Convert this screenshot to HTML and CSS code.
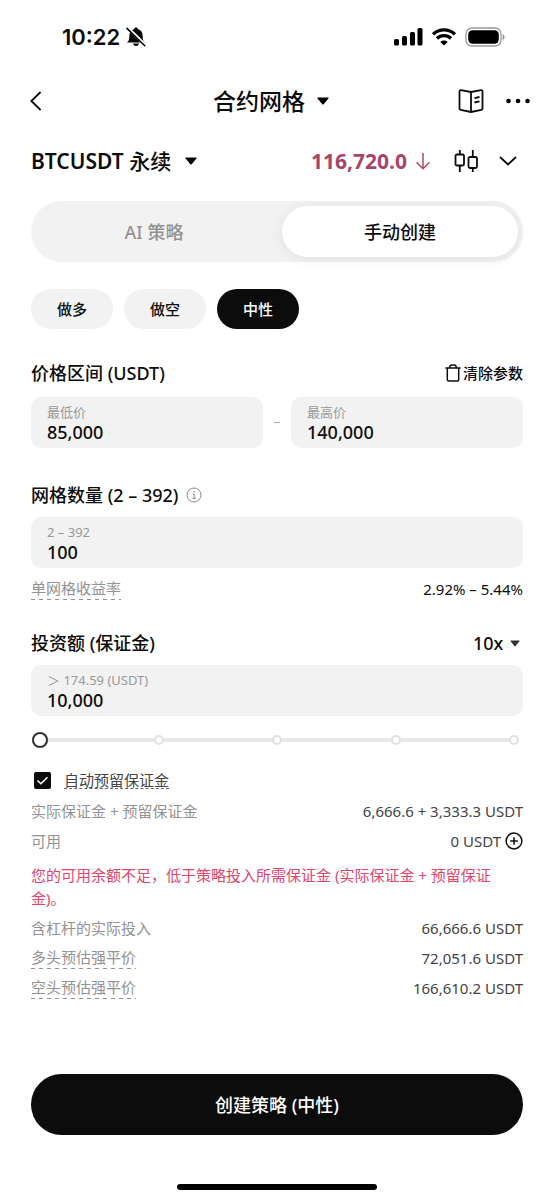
FILE: index.html
```
<!DOCTYPE html>
<html lang="zh-CN">
<head>
<meta charset="utf-8">
<meta name="viewport" content="width=device-width, initial-scale=1">
<title>合约网格</title>
<link rel="stylesheet" href="styles.css">
</head>
<body>
<div class="app">
  <div class="status">
    <div class="status-left">
      <span class="time">10:22</span>
      <svg width="20" height="20" viewBox="0 0 20 20" aria-hidden="true">
        <path d="M.8 15.600c2.200-1.500 2.500-3.200 2.500-6.400C3.300 5.400 5 3 8 2.300 8.300 1 9 .5 10 .5s1.700.5 2 1.800c3 .7 4.700 3.100 4.700 6.900 0 3.200.3 4.900 2.500 6.400z"/>
        <path d="M7 16.600h6c-.4 1.700-1.400 2.500-3 2.500s-2.600-.8-3-2.500z"/>
        <path d="M1.500.8 19.300 18" stroke="#fff" stroke-width="3.300"/>
        <path d="M.9 1.400 18.800 18.700" stroke="#000" stroke-width="1.500" stroke-linecap="round"/>
      </svg>
    </div>
    <div class="status-right">
      <svg width="30" height="18" viewBox="0 0 30 18" aria-hidden="true">
        <rect x="1" y="11" width="5" height="6.500" rx="1.500"/><rect x="9" y="8" width="5" height="9.500" rx="1.500"/><rect x="17" y="4" width="5" height="13.500" rx="1.500"/><rect x="24.500" y="0" width="5" height="17.500" rx="1.500"/>
      </svg>
      <svg width="24" height="18" viewBox="0 0 24 18" aria-hidden="true">
        <g fill="none" stroke="#000" stroke-width="3.200"><path d="M1 6.300a15.800 15.800 0 0 1 22 0"/><path d="M5 10.500a10.200 10.200 0 0 1 14 0"/></g>
        <path d="M12 17.500 8.300 13.900a5.400 5.400 0 0 1 7.400 0z"/>
      </svg>
      <svg width="40" height="20" viewBox="0 0 40 20" aria-hidden="true">
        <rect x="1" y="1" width="35" height="18" rx="6" fill="none" stroke="#999" stroke-width="1.300"/><rect x="3.200" y="3.200" width="30.600" height="13.600" rx="4.200"/><path d="M37.600 7v6c1.300-.5 2-1.600 2-3s-.7-2.500-2-3z" fill="#999"/>
      </svg>
    </div>
  </div>

  <header class="nav">
    <div class="nav-side">
      <button class="icon-btn" aria-label="返回"><svg width="12" height="20" viewBox="0 0 12 20"><path d="M10.600 1 1.300 10l9.300 9" class="line thick"/></svg></button>
    </div>
    <button class="title">合约网格 <svg width="12" height="8" viewBox="0 0 12 8"><path d="M1 .5h10q1 0 .4.900L6.700 7.200q-.7.700-1.400 0L.6 1.400Q0 .5 1 .5z"/></svg></button>
    <div class="nav-side nav-actions">
      <button class="icon-btn" aria-label="教程"><svg width="26" height="24" viewBox="0 0 26 24"><g class="line thick"><path d="M13 3 3 1.200q-1.500-.2-1.500 1.200v17q0 1.200 1.200 1.400L13 23l10.300-2.200q1.200-.2 1.200-1.400v-17q0-1.400-1.500-1.200z" stroke-linejoin="round"/><path d="M13 3v20M16.500 9.200l5-1.200M16.500 13.500l5-1.200"/></g></svg></button>
      <button class="icon-btn" aria-label="更多"><svg width="24" height="6" viewBox="0 0 24 6"><circle cx="2.500" cy="3" r="2.300"/><circle cx="12" cy="3" r="2.300"/><circle cx="21.500" cy="3" r="2.300"/></svg></button>
    </div>
  </header>

  <main class="content">
    <div class="row pair-row">
      <button class="pair"><span>BTCUSDT <span class="kind">永续</span></span><svg width="12" height="8" viewBox="0 0 12 8"><path d="M1 .5h10q1 0 .4.900L6.700 7.200q-.7.700-1.400 0L.6 1.400Q0 .5 1 .5z"/></svg></button>
      <div class="quote">
        <span class="price">116,720.0</span>
        <svg class="price-arrow" width="16" height="18" viewBox="0 0 16 18" aria-hidden="true"><path d="M8 1v15.500M1.500 10.200 8 16.700l6.500-6.500" fill="none" stroke="#b24a66" stroke-width="1.500"/></svg>
        <button class="icon-btn" aria-label="K线"><svg width="26" height="24" viewBox="0 0 26 24"><g class="line thick"><rect x="2.500" y="5.500" width="8.500" height="11" rx="1.500"/><rect x="15.500" y="8" width="8.500" height="11" rx="1.500"/><path d="M6.800 1v4.500M6.800 16.500V23M19.800 1v7M19.800 19v4"/></g></svg></button>
        <button class="icon-btn expand" aria-label="展开"><svg width="18" height="10" viewBox="0 0 18 10"><path d="m1 1 8 7.500L17 1" class="line thick"/></svg></button>
      </div>
    </div>

    <div class="tabs" role="tablist">
      <button class="tab" role="tab" aria-selected="false">AI 策略</button>
      <button class="tab active" role="tab" aria-selected="true">手动创建</button>
    </div>

    <div class="chips">
      <button class="chip" aria-pressed="false">做多</button>
      <button class="chip" aria-pressed="false">做空</button>
      <button class="chip active" aria-pressed="true">中性</button>
    </div>

    <section class="section prices">
      <div class="row">
        <h2>价格区间 (USDT)</h2>
        <button class="clear"><svg width="16" height="18" viewBox="0 0 16 18"><g class="line"><path d="M.5 4h15M2.300 4v11.500q0 1.500 1.500 1.500h8.400q1.500 0 1.500-1.500V4M4.700 4q0-3 2-3h2.600q2 0 2 3"/></g></svg>清除参数</button>
      </div>
      <div class="range">
        <label class="field"><span class="hint">最低价</span><input class="value" type="text" value="85,000"></label>
        <span class="dash"></span>
        <label class="field"><span class="hint">最高价</span><input class="value" type="text" value="140,000"></label>
      </div>
    </section>

    <section class="section">
      <div class="row">
        <h2>网格数量 (2 – 392) <svg class="info" width="16" height="16" viewBox="0 0 16 16" aria-hidden="true"><circle cx="8" cy="8" r="7" fill="none" stroke="#888"/><circle cx="8" cy="4.800" r=".8" fill="#888"/><path d="M6.700 7.200H8.200v4M6.400 11.300h3.500" fill="none" stroke="#888"/></svg></h2>
      </div>
      <label class="field"><span class="hint">2 – 392</span><input class="value" type="text" value="100"></label>
      <div class="row profit"><span class="term">单网格收益率</span><span>2.92% – 5.44%</span></div>
    </section>

    <section class="section invest">
      <div class="row">
        <h2>投资额 (保证金)</h2>
        <div class="leverage">
          <select aria-label="杠杆倍数"><option>10x</option></select>
          <svg width="10" height="7" viewBox="0 0 10 7" aria-hidden="true"><path d="M1 .5h8q1 0 .4.800L5.600 6q-.6.700-1.200 0L.6 1.300Q0 .5 1 .5z" fill="#333"/></svg>
        </div>
      </div>
      <label class="field"><span class="hint">＞ 174.59 (USDT)</span><input class="value" type="text" value="10,000"></label>
      <div class="slider">
        <div class="stops"><i></i><i></i><i></i><i></i><i></i></div>
        <input type="range" min="0" max="100" value="0" aria-label="投资比例">
      </div>
      <div class="reserve">
        <input type="checkbox" id="reserve" checked>
        <label for="reserve">自动预留保证金</label>
      </div>
      <div class="details">
        <div class="row"><span>实际保证金 + 预留保证金</span><b>6,666.6 + 3,333.3 USDT</b></div>
        <div class="row"><span>可用</span><b class="available">0 USDT <button class="icon-btn" aria-label="充值"><svg width="18" height="18" viewBox="0 0 18 18"><g class="line"><circle cx="9" cy="9" r="7.900"/><path d="M9 5.200v7.600M5.200 9h7.600"/></g></svg></button></b></div>
        <p class="warning">您的可用余额不足，低于策略投入所需保证金 (实际保证金 + 预留保证金)。</p>
        <div class="row"><span>含杠杆的实际投入</span><b>66,666.6 USDT</b></div>
        <div class="row"><span class="term">多头预估强平价</span><b>72,051.6 USDT</b></div>
        <div class="row"><span class="term">空头预估强平价</span><b>166,610.2 USDT</b></div>
      </div>
    </section>

    <button class="submit">创建策略 (中性)</button>
  </main>
  <div class="home"></div>
</div>
</body>
</html>
```
FILE: styles.css
```
* { box-sizing: border-box; }

body {
  margin: 0;
  background: #fff;
  color: #0c0c0c;
  font-family: "Noto Sans", "Noto Sans CJK SC", sans-serif;
  font-size: 15px;
  line-height: 20px;
}

button, input, select {
  margin: 0;
  padding: 0;
  border: 0;
  background: none;
  color: inherit;
  font: inherit;
}

svg { display: block; flex: none; }
.line { fill: none; stroke: #0c0c0c; stroke-width: 1.500; }
.thick { stroke-width: 1.800; }
.icon-btn { display: flex; }
.row { display: flex; align-items: center; justify-content: space-between; }

.status {
  display: flex;
  justify-content: space-between;
  align-items: center;
  height: 74px;
  padding: 0 49px 0 62px;
}
.status-left { display: flex; align-items: center; gap: 6px; }
.time { font: 600 22px/28px Inter, sans-serif; }
.status-right { display: flex; align-items: center; gap: 9px; }

.nav {
  display: flex;
  align-items: center;
  height: 54px;
  padding: 0 24px 0 30px;
}
.nav-side { flex: 1; display: flex; }
.nav-actions { justify-content: flex-end; align-items: center; gap: 22px; }
.title {
  display: flex;
  align-items: center;
  gap: 12px;
  margin-right: 18px;
  font-size: 23px;
  font-weight: 500;
  line-height: 32px;
}

.content { padding: 16px 31px 0; }
.pair-row { height: 34px; }
.pair {
  display: flex;
  align-items: center;
  gap: 14px;
  font-size: 21px;
  font-weight: 600;
  line-height: 28px;
}
.kind { font-weight: 500; }
.quote { display: flex; align-items: center; padding-right: 6px; }
.price { color: #a8466a; font-size: 21px; font-weight: 700; line-height: 28px; }
.price-arrow { margin: 0 22px 0 8px; }
.expand { margin-left: 20px; }

.tabs {
  display: grid;
  grid-template-columns: 1fr 1fr;
  height: 61px;
  margin-top: 23px;
  border-radius: 31px;
  background: #f2f2f2;
}
.tab { color: #929292; font-size: 18px; font-weight: 500; }
.tab.active {
  margin: 5px;
  border-radius: 26px;
  background: #fff;
  color: #0c0c0c;
  box-shadow: 0 2px 14px rgba(0, 0, 0, 0.08);
}

.chips { display: flex; gap: 11px; margin-top: 27px; }
.chip {
  width: 82px;
  height: 40px;
  border-radius: 20px;
  background: #f2f2f2;
  font-weight: 500;
}
.chip.active { background: #0c0c0c; color: #fff; }

.section { margin-top: 35px; }
.section.prices { margin-top: 32px; }
.section.invest { margin-top: 30px; }
.section > .row { min-height: 24px; }
h2 {
  display: flex;
  align-items: center;
  gap: 8px;
  margin: 0;
  font-size: 18px;
  font-weight: 500;
  line-height: 24px;
}
.clear { display: flex; align-items: center; gap: 2px; font-weight: 500; }
.range { display: flex; align-items: center; gap: 11px; margin-top: 12px; }
.range .field { flex: 1; min-width: 0; margin-top: 0; }
.dash { width: 6px; height: 1px; background: #aaa; }
.field {
  display: block;
  margin-top: 10px;
  padding: 6px 16px 5px;
  border-radius: 10px;
  background: #f2f2f2;
}
.hint { display: block; color: #999; font-size: 13px; line-height: 18px; }
.value {
  display: block;
  width: 100%;
  height: 22px;
  font-size: 18px;
  font-weight: 500;
  line-height: 22px;
  outline: none;
}
.section > .profit { margin-top: 9px; }
.term {
  padding-bottom: 2px;
  color: #929292;
  background: repeating-linear-gradient(90deg, #929292 0 4px, transparent 4px 8px) bottom / 100% 1px no-repeat;
}

.leverage { display: flex; align-items: center; gap: 6px; padding-right: 3px; }
.leverage select { appearance: none; font-size: 18px; font-weight: 500; line-height: 24px; }

.slider { display: grid; align-items: center; margin-top: 16px; padding: 0 1px; }
.slider > * { grid-area: 1 / 1; }
.stops {
  display: flex;
  align-items: center;
  justify-content: space-between;
  margin: 0 3px;
  background: linear-gradient(#e8e8e8, #e8e8e8) center / 100% 4px no-repeat;
}
.stops i { width: 10px; height: 10px; border: 2px solid #e0e0e0; border-radius: 50%; background: #fff; }
.slider input { appearance: none; width: 100%; height: 16px; }
.slider input::-webkit-slider-thumb {
  appearance: none;
  width: 16px;
  height: 16px;
  border: 2px solid #333;
  border-radius: 50%;
  background: #fff;
}

.reserve { display: flex; align-items: center; gap: 13px; margin-top: 22px; padding-left: 3px; }
.reserve input {
  appearance: none;
  width: 17px;
  height: 17px;
  border-radius: 2px;
  background: #0c0c0c url("data:image/svg+xml,%3Csvg xmlns='http://www.w3.org/2000/svg' viewBox='0 0 17 17'%3E%3Cpath d='M3.500 8.500l3.400 3.300 6.600-6.600' fill='none' stroke='%23fff' stroke-width='1.500'/%3E%3C/svg%3E") center no-repeat;
}
.reserve label { color: #444; text-decoration: underline dashed #666 1px; text-underline-offset: 2px; }

.details { margin-top: 10px; display: grid; gap: 9px; }
.details .row { height: 21px; color: #929292; }
.details b { color: #444; font-weight: 400; }
.details .available { display: flex; align-items: center; gap: 4px; }
.warning { margin: 4px 0 -2px; color: #e0456b; line-height: 23px; }

.submit {
  display: block;
  width: 100%;
  height: 61px;
  margin-top: 76px;
  border-radius: 31px;
  background: #0c0c0c;
  color: #fff;
  font-size: 18px;
  font-weight: 500;
}
.home { width: 36%; height: 6px; margin: 49px auto 10px; border-radius: 3px; background: #000; }
```
